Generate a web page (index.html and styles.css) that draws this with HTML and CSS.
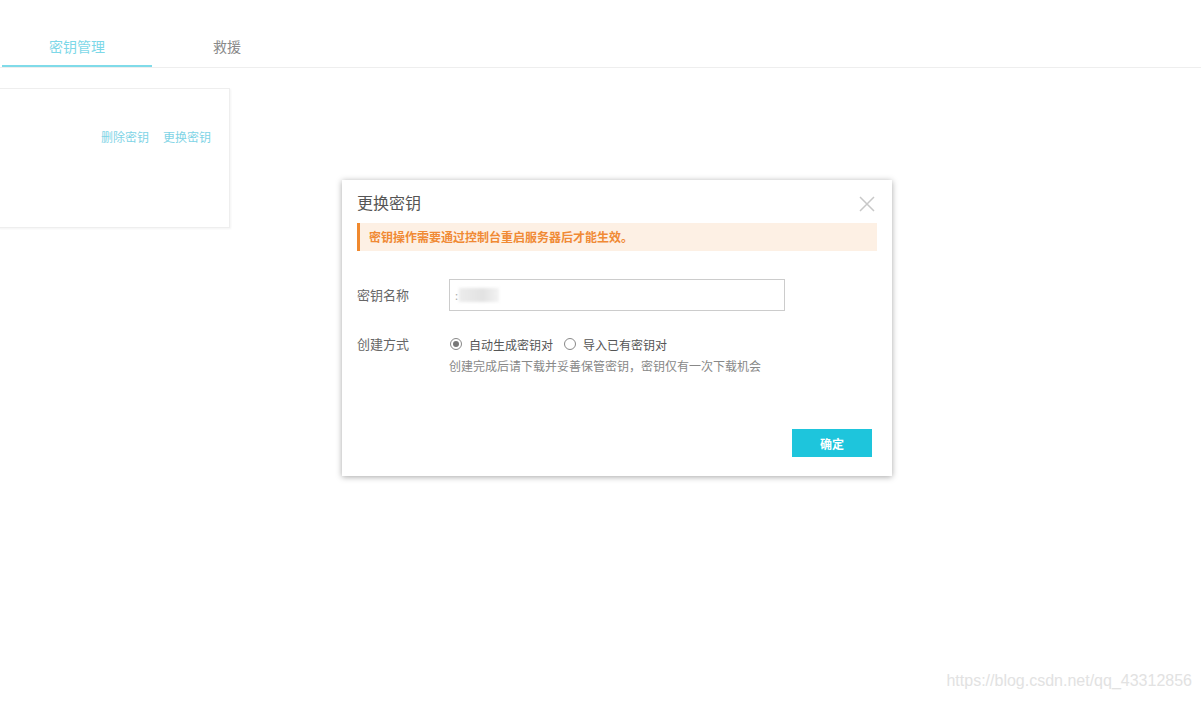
FILE: index.html
```html
<!DOCTYPE html>
<html lang="zh">
<head>
<meta charset="utf-8">
<title>密钥管理</title>
<link rel="stylesheet" href="styles.css">
</head>
<body>
<div class="page">
  <div class="tabs">
    <div class="tab active">密钥管理</div>
    <div class="tab">救援</div>
  </div>
  <div class="card">
    <div class="card-actions">
      <a class="link">删除密钥</a>
      <a class="link">更换密钥</a>
    </div>
  </div>

  <div class="modal">
    <div class="modal-head">
      <h2 class="modal-title">更换密钥</h2>
      <span class="close">
        <svg width="16" height="16" viewBox="0 0 16 16"><path d="M1 1L15 15M15 1L1 15" stroke="#c8c8c8" stroke-width="1.5" fill="none"/></svg>
      </span>
    </div>
    <div class="alert">密钥操作需要通过控制台重启服务器后才能生效。</div>
    <div class="form">
      <div class="row">
        <div class="label">密钥名称</div>
        <div class="input"><span class="ghost-char">:</span><span class="blur"></span></div>
      </div>
      <div class="row row-mode">
        <div class="label">创建方式</div>
        <div class="field">
          <div class="radios">
            <span class="radio checked"></span><span class="radio-text">自动生成密钥对</span>
            <span class="radio"></span><span class="radio-text">导入已有密钥对</span>
          </div>
          <div class="help">创建完成后请下载并妥善保管密钥，密钥仅有一次下载机会</div>
        </div>
      </div>
    </div>
    <div class="modal-foot">
      <button class="btn">确定</button>
    </div>
  </div>

  <div class="watermark">https://blog.csdn.net/qq_43312856</div>
</div>
</body>
</html>
```

FILE: styles.css
```css
* { box-sizing: border-box; }
html, body { margin: 0; padding: 0; background: #fff; }
body {
  font-family: "Noto Sans CJK SC", "Liberation Sans", sans-serif;
  color: #666;
  width: 1201px;
  height: 701px;
  overflow: hidden;
}
.page { position: relative; width: 1201px; height: 701px; }

.tabs {
  display: flex;
  padding-top: 30px;
  padding-left: 2px;
  border-bottom: 1px solid #eeeeee;
  height: 68px;
}
.tab {
  width: 150px;
  height: 37px;
  text-align: center;
  font-size: 14px;
  line-height: 33px;
  color: #888;
}
.tab.active {
  color: #7dd8e8;
  border-bottom: 2px solid #80dbe9;
}

.card {
  margin-top: 20px;
  width: 232px;
  height: 140px;
  margin-left: -2px;
  border: 1px solid #eeeeee;
  box-shadow: 1px 1px 2px rgba(0,0,0,0.05);
  background: #fff;
  display: flex;
  justify-content: flex-end;
  padding: 39px 18px 0 0;
}
.card-actions { display: flex; gap: 14px; height: 18px; }
.link {
  font-size: 12px;
  color: #7fd4e6;
  line-height: 18px;
}

.modal {
  position: absolute;
  left: 342px;
  top: 180px;
  width: 550px;
  height: 296px;
  background: #fff;
  box-shadow: 0 1px 6px rgba(0,0,0,0.35);
  padding: 0 15px;
  display: flex;
  flex-direction: column;
}
.modal-head {
  display: flex;
  justify-content: space-between;
  align-items: center;
  height: 43px;
  padding-top: 1px;
}
.modal-title {
  margin: 0;
  font-size: 16px;
  font-weight: normal;
  color: #555;
}
.close { display: flex; margin-right: 2px; margin-top: 3px; }

.alert {
  height: 28px;
  background: #fdf0e4;
  border-left: 3px solid #f0892e;
  color: #f08a35;
  font-size: 12px;
  font-weight: bold;
  line-height: 28px;
  padding-left: 9px;
}

.form { padding-top: 28px; }
.row { display: flex; align-items: center; }
.label {
  width: 92px;
  font-size: 13px;
  color: #666;
  margin-top: -2px;
}
.input {
  width: 336px;
  height: 32px;
  border: 1px solid #cccccc;
  display: flex;
  align-items: center;
  padding-left: 5px;
  font-size: 11px;
  color: #888;
}
.ghost-char { color: #aaa; }
.blur {
  width: 40px;
  height: 14px;
  margin-left: 1px;
  background: linear-gradient(90deg, #ececec, #e2e2e2 60%, #f3f3f3);
  filter: blur(1.5px);
}
.row-mode { align-items: flex-start; margin-top: 22px; }
.row-mode .label { line-height: 22px; margin-top: 0; }
.field { display: flex; flex-direction: column; }
.radios {
  display: flex;
  align-items: center;
  height: 22px;
  font-size: 12px;
  color: #555;
}
.radio {
  width: 12px;
  height: 12px;
  border: 1px solid #888;
  border-radius: 50%;
  margin-left: 1px;
  margin-right: 7px;
  position: relative;
}
.radio.checked::after {
  content: "";
  position: absolute;
  left: 2px;
  top: 2px;
  width: 6px;
  height: 6px;
  border-radius: 50%;
  background: #777;
}
.radio-text { margin-right: 10px; }
.help {
  font-size: 12px;
  color: #888;
  margin-top: 2px;
  line-height: 18px;
}

.modal-foot {
  margin-top: auto;
  display: flex;
  justify-content: flex-end;
  padding-bottom: 19px;
  padding-right: 5px;
}
.btn {
  width: 80px;
  height: 28px;
  border: none;
  background: #1ec5dc;
  color: #fff;
  font-family: inherit;
  font-size: 12px;
  font-weight: bold;
  padding: 0;
}

.watermark {
  position: absolute;
  right: 9px;
  top: 672px;
  font-family: "Liberation Sans", sans-serif;
  font-size: 16px;
  color: #e2e2e2;
}
```
